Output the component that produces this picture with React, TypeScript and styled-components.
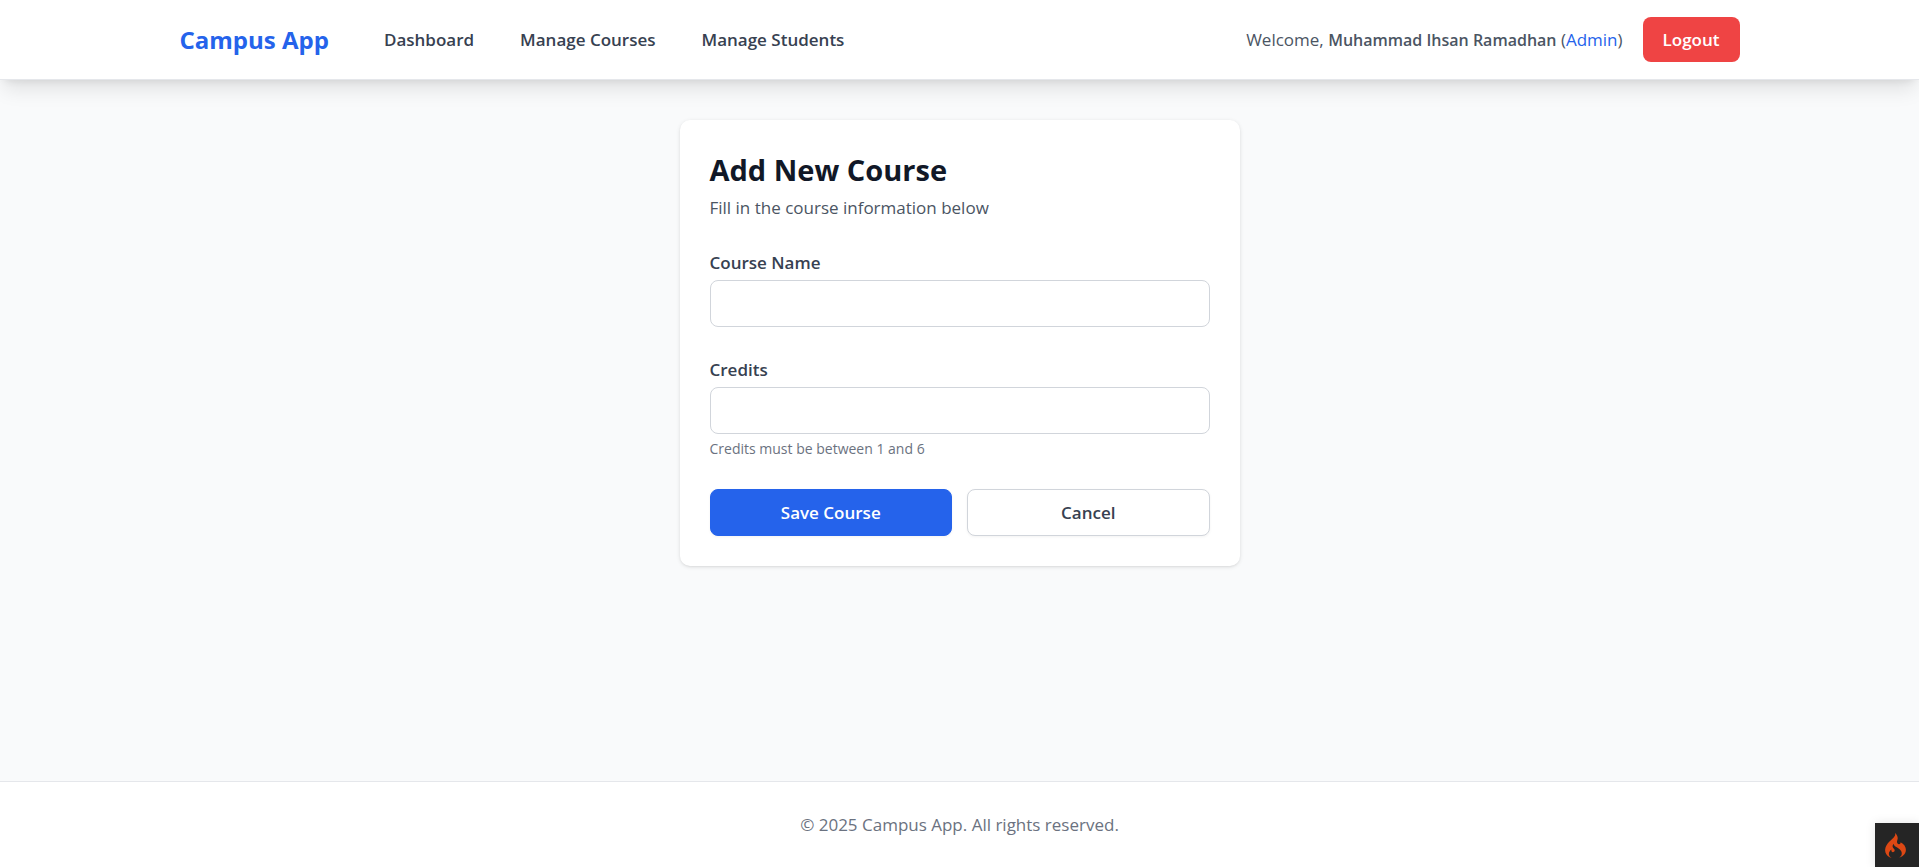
import React from "react";
import styled, { createGlobalStyle, css } from "styled-components";
import { SiCodeigniter } from "react-icons/si";

const GlobalStyle = createGlobalStyle`
  *, *::before, *::after { box-sizing: border-box; }
  body {
    margin: 0;
    background: #f9fafb;
    font-family: "Open Sans", "Noto Sans", sans-serif;
    font-size: 17px;
    line-height: 25px;
    color: #111827;
  }
  h1, p { margin: 0; }
  a { text-decoration: none; }
`;

const Page = styled.div`
  min-height: 100vh;
  display: flex;
  flex-direction: column;
`;

const Header = styled.header`
  background: #ffffff;
  border-bottom: 1px solid #e5e7eb;
  box-shadow: 0 13px 19px -4px rgba(0, 0, 0, 0.1), 0 5px 8px -5px rgba(0, 0, 0, 0.1);
`;

const HeaderInner = styled.div`
  max-width: 1600px;
  min-height: 79px;
  margin: 0 auto;
  padding: 0 20px;
  display: flex;
  align-items: center;
  justify-content: space-between;
`;

const NavGroup = styled.div`
  display: flex;
  align-items: center;
  gap: 55px;
`;

const Brand = styled.a`
  font-size: 24px;
  line-height: 35px;
  font-weight: 700;
  color: #2563eb;
`;

const Nav = styled.nav`
  display: flex;
  gap: 46px;
`;

const NavLink = styled.a`
  font-weight: 600;
  color: #374151;
`;

const UserGroup = styled.div`
  display: flex;
  align-items: center;
  gap: 20px;
`;

const Welcome = styled.p`
  color: #4b5563;
`;

const UserName = styled.span`
  font-size: 16px;
  font-weight: 600;
`;

const Role = styled.span`
  color: #2563eb;
`;

const LogoutButton = styled.button`
  padding: 10px 20px;
  border: 0;
  border-radius: 8px;
  background: #ef4444;
  color: #ffffff;
  font: inherit;
  font-weight: 600;
`;

const Main = styled.main`
  flex: 1;
  padding: 40px 20px;
`;

const Card = styled.section`
  max-width: 560px;
  margin: 0 auto;
  padding: 30px;
  background: #ffffff;
  border-radius: 10px;
  box-shadow: 0 1px 4px rgba(0, 0, 0, 0.1), 0 1px 3px -1px rgba(0, 0, 0, 0.1);
`;

const Title = styled.h1`
  font-size: 29px;
  line-height: 40px;
  font-weight: 700;
`;

const Subtitle = styled.p`
  margin-top: 5px;
  color: #4b5563;
`;

const Form = styled.form`
  margin-top: 30px;
  display: flex;
  flex-direction: column;
  gap: 30px;
`;

const Field = styled.div`
  display: flex;
  flex-direction: column;
  gap: 5px;
`;

const Label = styled.label`
  font-weight: 600;
  color: #374151;
`;

const Input = styled.input`
  width: 100%;
  height: 47px;
  padding: 10px 15px;
  border: 1px solid #d1d5db;
  border-radius: 8px;
  background: #ffffff;
  font: inherit;
  appearance: textfield;
`;

const Hint = styled.p`
  font-size: 14px;
  line-height: 20px;
  color: #6b7280;
`;

const Actions = styled.div`
  display: grid;
  grid-template-columns: 1fr 1fr;
  gap: 15px;
`;

const ActionButton = styled.button<{ $primary?: boolean }>`
  height: 47px;
  padding: 0 20px;
  border: 1px solid #d1d5db;
  border-radius: 8px;
  background: #ffffff;
  color: #374151;
  font: inherit;
  font-weight: 600;
  box-shadow: 0 1px 3px rgba(0, 0, 0, 0.05);
  ${(p) =>
    p.$primary &&
    css`
      border-color: #2563eb;
      background: #2563eb;
      color: #ffffff;
    `}
`;

const Footer = styled.footer`
  padding: 30px 20px;
  border-top: 1px solid #e5e7eb;
  background: #ffffff;
  color: #6b7280;
  text-align: center;
`;

const DebugButton = styled.button`
  position: fixed;
  right: 0;
  bottom: 0;
  width: 44px;
  height: 44px;
  padding: 0 4px 0 0;
  border: 0;
  background: #252525;
  color: #dd4814;
  box-shadow: 0 0 10px rgba(0, 0, 0, 0.1);
  display: flex;
  align-items: center;
  justify-content: center;
`;

export default function App() {
  return (
    <Page>
      <GlobalStyle />
      <Header>
        <HeaderInner>
          <NavGroup>
            <Brand href="#">Campus App</Brand>
            <Nav>
              <NavLink href="#">Dashboard</NavLink>
              <NavLink href="#">Manage Courses</NavLink>
              <NavLink href="#">Manage Students</NavLink>
            </Nav>
          </NavGroup>
          <UserGroup>
            <Welcome>
              Welcome, <UserName>Muhammad Ihsan Ramadhan</UserName> (<Role>Admin</Role>)
            </Welcome>
            <LogoutButton type="button">Logout</LogoutButton>
          </UserGroup>
        </HeaderInner>
      </Header>
      <Main>
        <Card>
          <Title>Add New Course</Title>
          <Subtitle>Fill in the course information below</Subtitle>
          <Form onSubmit={(e) => e.preventDefault()}>
            <Field>
              <Label htmlFor="course-name">Course Name</Label>
              <Input id="course-name" type="text" />
            </Field>
            <Field>
              <Label htmlFor="credits">Credits</Label>
              <Input id="credits" type="number" min={1} max={6} />
              <Hint>Credits must be between 1 and 6</Hint>
            </Field>
            <Actions>
              <ActionButton type="submit" $primary>
                Save Course
              </ActionButton>
              <ActionButton type="button">Cancel</ActionButton>
            </Actions>
          </Form>
        </Card>
      </Main>
      <Footer>© 2025 Campus App. All rights reserved.</Footer>
      <DebugButton type="button" aria-label="Open debug toolbar">
        <SiCodeigniter size={25} aria-hidden="true" />
      </DebugButton>
    </Page>
  );
}
